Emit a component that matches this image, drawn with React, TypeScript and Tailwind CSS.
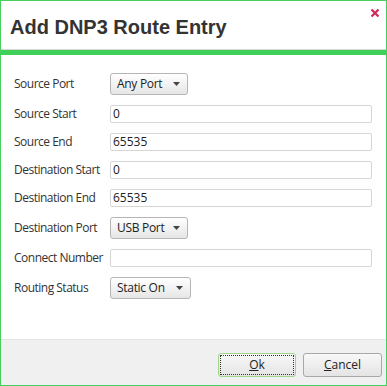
import React from 'react';

const labelCls = "w-[96px] shrink-0 text-[12px] text-[#333] tracking-[-0.5px]";

const Select: React.FC<{ value: string; w: string }> = ({ value, w }) => (
  <div className={`${w} h-[22px] flex items-center justify-between pl-[6px] pr-[7px] rounded-[3px] border border-[#b5b5b5] bg-gradient-to-b from-white to-[#e6e6e6] text-[12px] text-[#222] tracking-[-0.3px]`}>
    <span>{value}</span>
    <svg width="7" height="4" viewBox="0 0 7 4"><path d="M0 0h7L3.5 4z" fill="#444" /></svg>
  </div>
);

const Input: React.FC<{ value?: string }> = ({ value }) => (
  <div className="w-[262px] h-[18px] flex items-center pl-[2px] border border-[#d6d6d6] rounded-[2px] bg-white text-[12px] text-[#222]">
    {value}
  </div>
);

const rows: { label: string; kind: 'select' | 'input'; value: string; w?: string }[] = [
  { label: 'Source Port', kind: 'select', value: 'Any Port', w: 'w-[78px]' },
  { label: 'Source Start', kind: 'input', value: '0' },
  { label: 'Source End', kind: 'input', value: '65535' },
  { label: 'Destination Start', kind: 'input', value: '0' },
  { label: 'Destination End', kind: 'input', value: '65535' },
  { label: 'Destination Port', kind: 'select', value: 'USB Port', w: 'w-[78px]' },
  { label: 'Connect Number', kind: 'input', value: '' },
  { label: 'Routing Status', kind: 'select', value: 'Static On', w: 'w-[81px]' },
];

export default function App() {
  return (
    <div className="w-[387px] h-[386px] border border-[#45cf5e] flex flex-col bg-white" style={{ fontFamily: '"Open Sans", sans-serif' }}>
      <div className="h-[49px] relative border-b border-[#d8d8d8]">
        <h1 className="absolute left-[9px] top-[16px] text-[20px] font-bold text-[#333] leading-none" style={{ fontFamily: '"Liberation Sans", Arial, sans-serif' }}>
          Add DNP3 Route Entry
        </h1>
        <svg className="absolute right-[6px] top-[7px]" width="10" height="10" viewBox="0 0 10 10">
          <path d="M1.5 1.5l7 7M8.5 1.5l-7 7" stroke="#d2275a" strokeWidth="2.2" />
        </svg>
      </div>
      <div className="h-[5px] bg-[#3fd05a]" />
      <div className="flex-1 flex flex-col gap-[10px] pt-[18px] pl-[13px]">
        {rows.map(r => (
          <div key={r.label} className="flex items-center">
            <div className={labelCls}>{r.label}</div>
            {r.kind === 'select' ? <Select value={r.value} w={r.w!} /> : <Input value={r.value} />}
          </div>
        ))}
      </div>
      <div className="h-[46px] bg-[#f0f0f0] border-t border-[#e4e4e4] flex justify-end items-start pt-[13px] pr-[4px] gap-[7px]">
        <button className="w-[78px] h-[24px] rounded-[3px] border border-[#9fd68c] bg-gradient-to-b from-[#f8f8f8] to-[#e4e4e4] p-[1px]">
          <div className="w-full h-full border border-dotted border-[#333] flex items-center justify-center text-[12px] text-[#222]">
            <span><span className="underline">O</span>k</span>
          </div>
        </button>
        <button className="w-[79px] h-[24px] rounded-[3px] border border-[#a8a8a8] bg-gradient-to-b from-[#f8f8f8] to-[#e4e4e4] flex items-center justify-center text-[12px] text-[#222]">
          <span><span className="underline">C</span>ancel</span>
        </button>
      </div>
    </div>
  );
}
